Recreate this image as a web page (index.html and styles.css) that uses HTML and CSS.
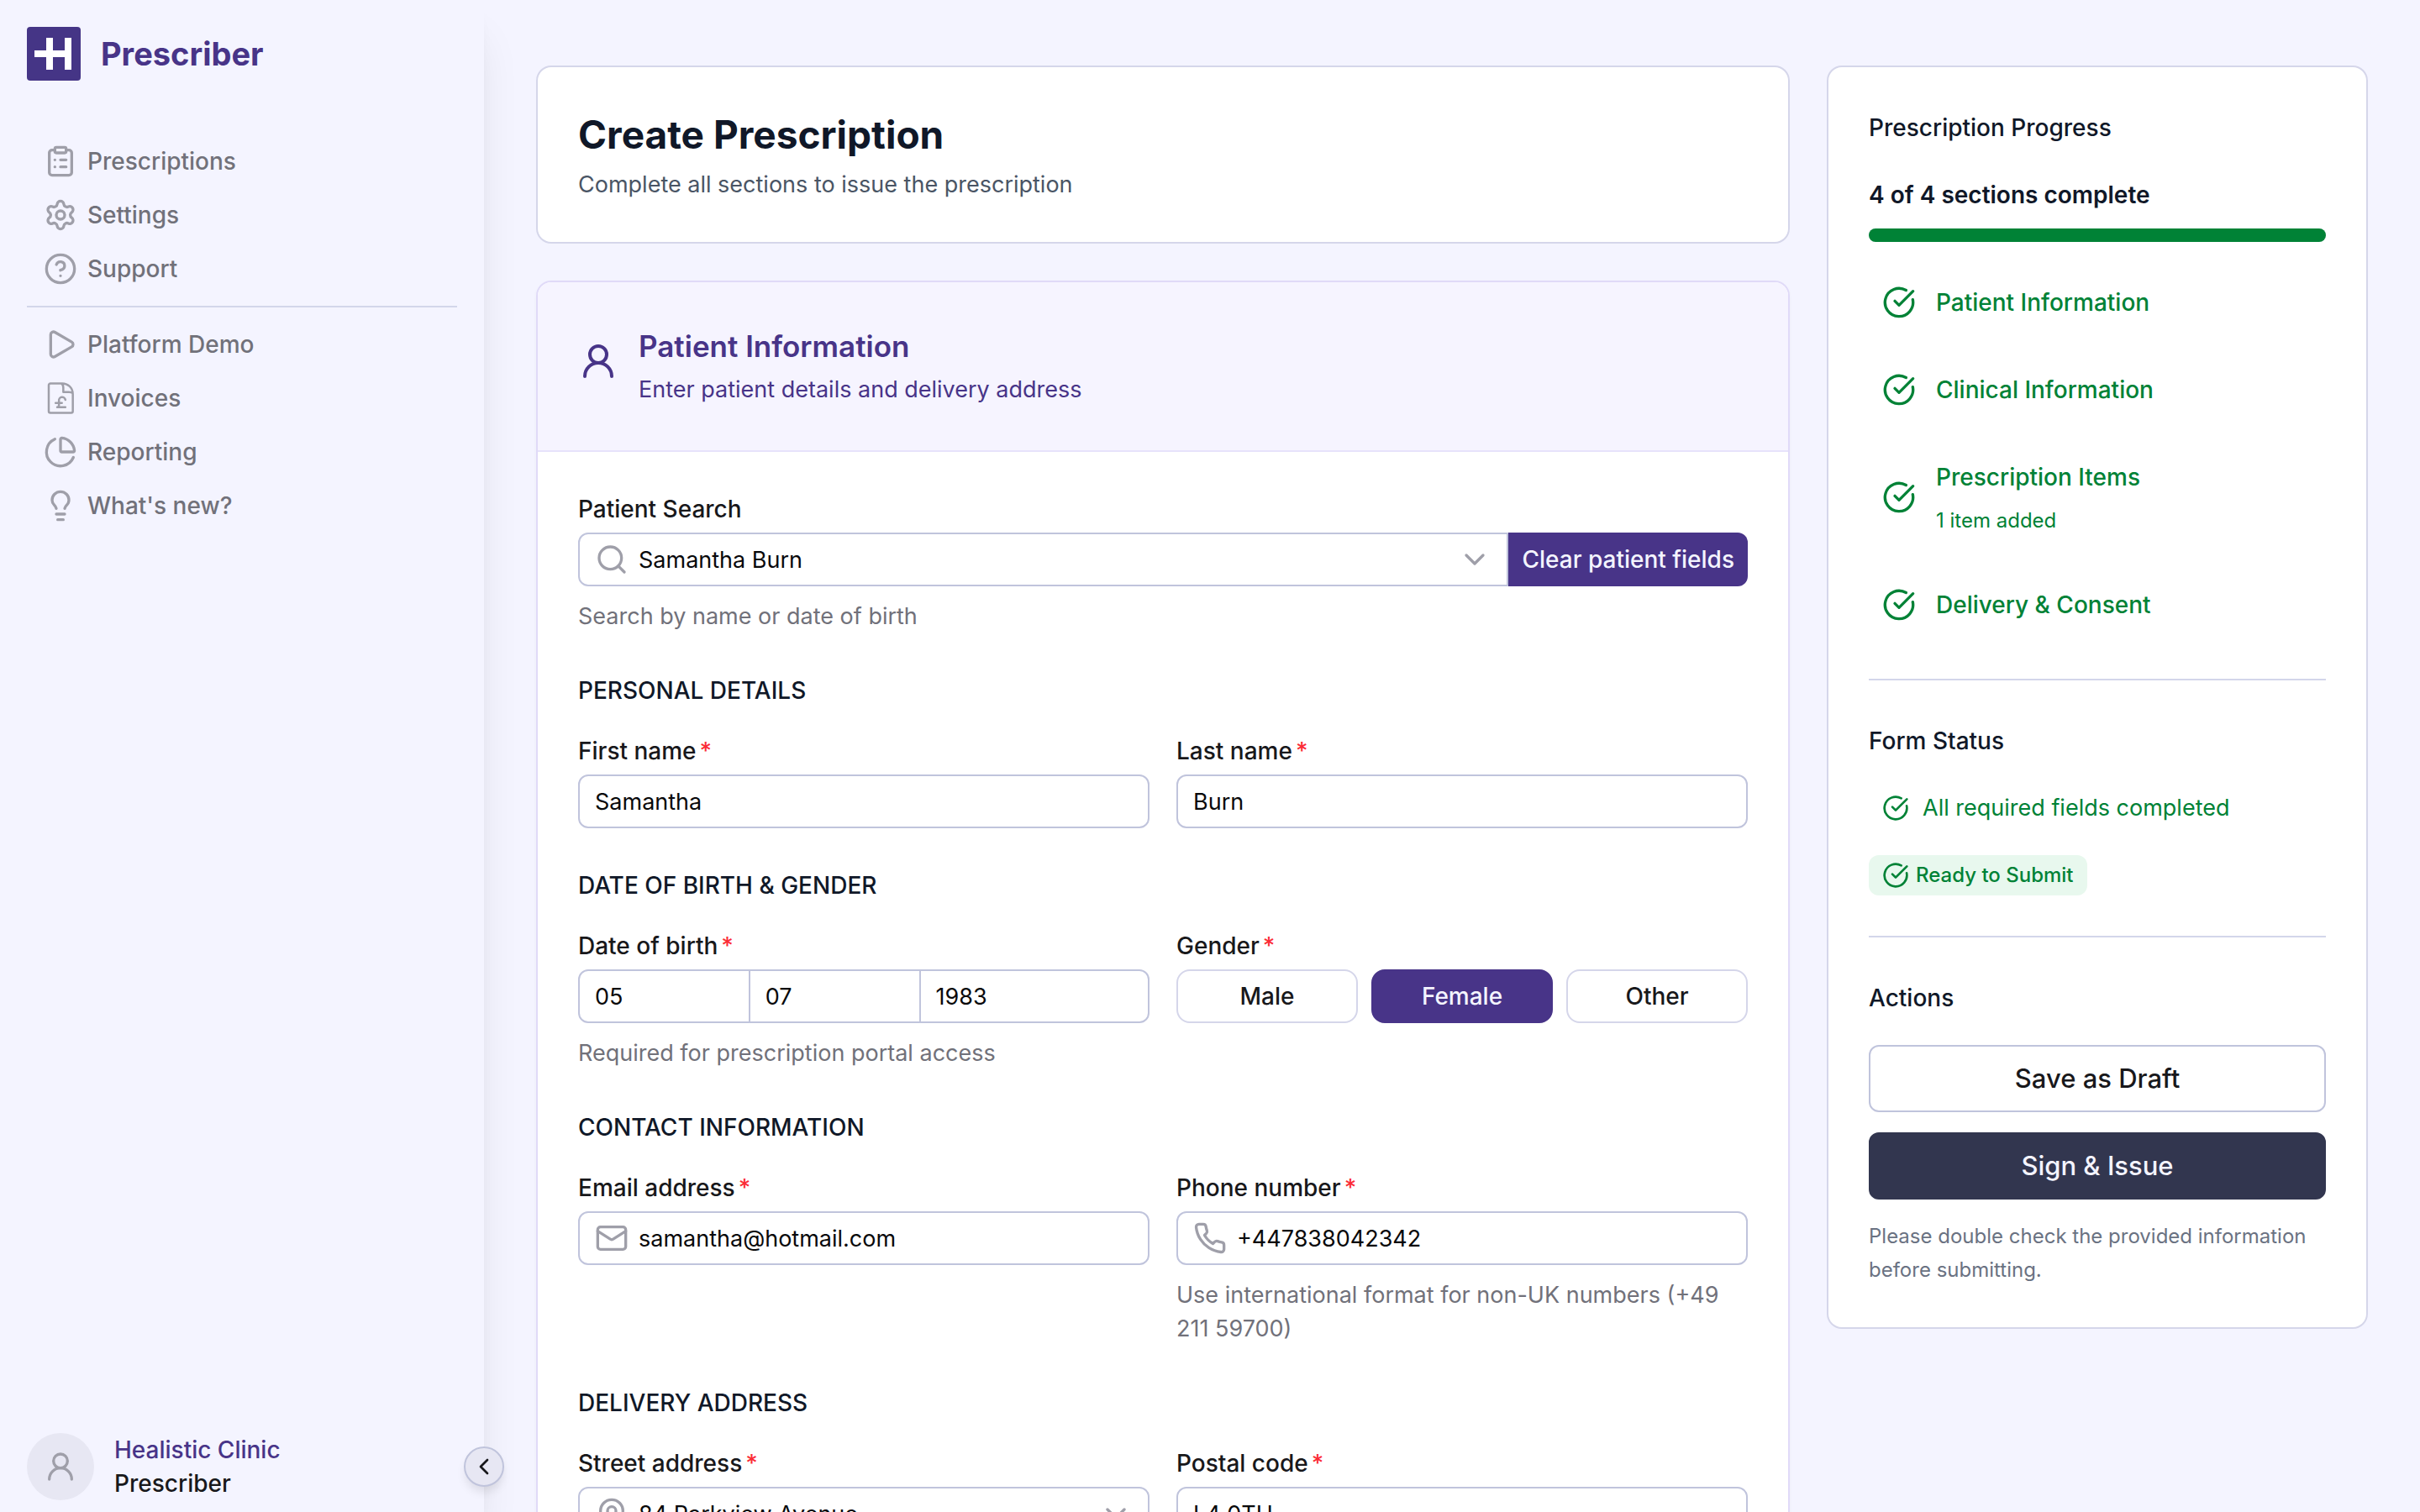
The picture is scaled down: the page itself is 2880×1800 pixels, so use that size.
FILE: index.html
```html
<!DOCTYPE html>
<html lang="en">
<head>
<meta charset="utf-8">
<title>Create Prescription</title>
<link rel="stylesheet" href="styles.css">
</head>
<body>
<svg class="sprite" aria-hidden="true">
  <symbol id="i-check" viewBox="0 0 24 24"><path d="M21.801 10A10 10 0 1 1 17 3.335"/><path d="m9 11 3 3L22 4"/></symbol>
  <symbol id="i-user" viewBox="0 0 24 24"><circle cx="12" cy="8" r="5"/><path d="M20 21a8 8 0 0 0-16 0"/></symbol>
  <symbol id="i-down" viewBox="0 0 24 24"><path d="m6 9 6 6 6-6"/></symbol>
</svg>
<div class="app">
  <aside class="sidebar">
    <div class="brand">
      <svg class="brand-logo" viewBox="0 0 64 64" aria-hidden="true"><rect width="64" height="64" rx="4" fill="#453586"/><path d="M9 28h14V13h8v15h14V13h8v38h-8V36H31v15h-8V36H9z" fill="#fff"/></svg>
      <span class="brand-name">Prescriber</span>
    </div>
    <nav class="nav">
      <a class="nav-link" href="#"><svg class="icon" viewBox="0 0 24 24"><path d="M16 4h2a2 2 0 0 1 2 2v14a2 2 0 0 1-2 2H6a2 2 0 0 1-2-2V6a2 2 0 0 1 2-2h2"/><rect x="8" y="2" width="8" height="4" rx="1"/><path d="M12 11h4M12 16h4M8 11h.01M8 16h.01"/></svg>Prescriptions</a>
      <a class="nav-link" href="#"><svg class="icon" viewBox="0 0 24 24"><path d="M9.671 4.136a2.340 2.340 0 0 1 4.659 0 2.340 2.340 0 0 0 3.319 1.915 2.340 2.340 0 0 1 2.330 4.033 2.340 2.340 0 0 0 0 3.831 2.340 2.340 0 0 1-2.330 4.033 2.340 2.340 0 0 0-3.319 1.915 2.340 2.340 0 0 1-4.659 0 2.340 2.340 0 0 0-3.320-1.915 2.340 2.340 0 0 1-2.330-4.033 2.340 2.340 0 0 0 0-3.831A2.340 2.340 0 0 1 6.350 6.051a2.340 2.340 0 0 0 3.319-1.915"/><circle cx="12" cy="12" r="3"/></svg>Settings</a>
      <a class="nav-link" href="#"><svg class="icon" viewBox="0 0 24 24"><circle cx="12" cy="12" r="10"/><path d="M9.090 9a3 3 0 0 1 5.830 1c0 2-3 3-3 3M12 17h.01"/></svg>Support</a>
    </nav>
    <hr class="nav-rule">
    <nav class="nav">
      <a class="nav-link" href="#"><svg class="icon" viewBox="0 0 24 24"><path d="M5 5a2 2 0 0 1 3.008-1.728l11.997 6.998a2 2 0 0 1 .003 3.458l-12 7A2 2 0 0 1 5 19z"/></svg>Platform Demo</a>
      <a class="nav-link" href="#"><svg class="icon icon-thin" viewBox="0 0 24 24"><path d="M13 1.500H4.800a1.200 1.200 0 0 0-1.200 1.200v18.600a1.200 1.200 0 0 0 1.200 1.200h14.800a1.200 1.200 0 0 0 1.200-1.200V9A7.500 7.500 0 0 0 12.500 1.500c1 .6 1.500 1.600 1.500 3v3.200h4c1.200 0 2 .2 2.700.8"/><path d="M15.500 13.200a2.200 2.200 0 0 0-4.600.8v3c0 .8-.5 1.500-1.300 1.500h5.900M8.500 15.500h4.500"/></svg>Invoices</a>
      <a class="nav-link" href="#"><svg class="icon" viewBox="0 0 24 24"><path d="M21 12c.552 0 1.005-.449.950-.998a10 10 0 0 0-8.953-8.951c-.550-.055-.998.398-.998.950v8a1 1 0 0 0 1 1z"/><path d="M21.210 15.890A10 10 0 1 1 8 2.830"/></svg>Reporting</a>
      <a class="nav-link" href="#"><svg class="icon" viewBox="0 0 24 24"><path d="M15 14c.2-1 .7-1.700 1.500-2.500 1-.9 1.500-2.200 1.500-3.500A6 6 0 0 0 6 8c0 1 .2 2.200 1.500 3.500.7.7 1.300 1.500 1.500 2.500M9 18h6M10 22h4"/></svg>What's new?</a>
    </nav>
    <div class="account">
      <span class="avatar"><svg class="icon" aria-hidden="true"><use href="#i-user"/></svg></span>
      <div class="account-text"><div class="account-org">Healistic Clinic</div><div class="account-role">Prescriber</div></div>
    </div>
    <button class="collapse" type="button" aria-label="Collapse sidebar"><svg class="collapse-icon" viewBox="0 0 24 24"><path d="m15 18-6-6 6-6"/></svg></button>
  </aside>

  <main class="main">
    <div class="column">
      <section class="card intro">
        <h1 class="page-title">Create Prescription</h1>
        <p class="page-sub">Complete all sections to issue the prescription</p>
      </section>

      <section class="card patient">
        <header class="patient-head">
          <svg class="patient-icon" aria-hidden="true"><use href="#i-user"/></svg>
          <div><h2 class="patient-title">Patient Information</h2><p class="patient-sub">Enter patient details and delivery address</p></div>
        </header>
        <form class="form">
          <div class="field">
            <label for="search">Patient Search</label>
            <div class="search-row">
              <div class="control control-joined">
                <svg class="icon" viewBox="0 0 24 24"><circle cx="11" cy="11" r="8"/><path d="m21 21-4.300-4.300"/></svg>
                <input id="search" type="text" value="Samantha Burn">
                <svg class="chevron" aria-hidden="true"><use href="#i-down"/></svg>
              </div>
              <button class="clear" type="button">Clear patient fields</button>
            </div>
            <p class="hint">Search by name or date of birth</p>
          </div>

          <fieldset class="group">
            <legend>PERSONAL DETAILS</legend>
            <div class="pair">
              <div class="field"><label for="first">First name<span class="req">*</span></label><div class="control"><input id="first" type="text" value="Samantha"></div></div>
              <div class="field"><label for="last">Last name<span class="req">*</span></label><div class="control"><input id="last" type="text" value="Burn"></div></div>
            </div>
          </fieldset>

          <fieldset class="group">
            <legend>DATE OF BIRTH &amp; GENDER</legend>
            <div class="pair">
              <div class="field">
                <label for="day">Date of birth<span class="req">*</span></label>
                <div class="control date">
                  <input id="day" type="text" value="05" aria-label="Day">
                  <input type="text" value="07" aria-label="Month">
                  <input class="year" type="text" value="1983" aria-label="Year">
                </div>
                <p class="hint">Required for prescription portal access</p>
              </div>
              <div class="field">
                <span class="label" id="gender">Gender<span class="req">*</span></span>
                <div class="choices" role="group" aria-labelledby="gender">
                  <button class="choice" type="button">Male</button>
                  <button class="choice choice-on" type="button" aria-pressed="true">Female</button>
                  <button class="choice" type="button">Other</button>
                </div>
              </div>
            </div>
          </fieldset>

          <fieldset class="group">
            <legend>CONTACT INFORMATION</legend>
            <div class="pair">
              <div class="field"><label for="email">Email address<span class="req">*</span></label><div class="control"><svg class="icon" viewBox="0 0 24 24"><rect x="2" y="4" width="20" height="16" rx="2"/><path d="m22 7-8.970 5.700a1.940 1.940 0 0 1-2.060 0L2 7"/></svg><input id="email" type="email" value="samantha@hotmail.com"></div></div>
              <div class="field"><label for="phone">Phone number<span class="req">*</span></label><div class="control"><svg class="icon" viewBox="0 0 24 24"><path d="M22 16.920v3a2 2 0 0 1-2.180 2 19.790 19.790 0 0 1-8.630-3.070 19.500 19.500 0 0 1-6-6 19.790 19.790 0 0 1-3.070-8.670A2 2 0 0 1 4.110 2h3a2 2 0 0 1 2 1.720 12.840 12.840 0 0 0 .7 2.810 2 2 0 0 1-.450 2.110L8.090 9.910a16 16 0 0 0 6 6l1.270-1.270a2 2 0 0 1 2.110-.450 12.840 12.840 0 0 0 2.810.7A2 2 0 0 1 22 16.920z"/></svg><input id="phone" type="tel" value="+447838042342"></div><p class="hint">Use international format for non-UK numbers (+49 211 59700)</p></div>
            </div>
          </fieldset>

          <fieldset class="group">
            <legend>DELIVERY ADDRESS</legend>
            <div class="pair">
              <div class="field"><label for="street">Street address<span class="req">*</span></label><div class="control"><svg class="icon" viewBox="0 0 24 24"><path d="M20 10c0 6-8 12-8 12s-8-6-8-12a8 8 0 0 1 16 0z"/><circle cx="12" cy="10" r="3"/></svg><input id="street" type="text" value="84 Parkview Avenue"><svg class="chevron" aria-hidden="true"><use href="#i-down"/></svg></div></div>
              <div class="field"><label for="postal">Postal code<span class="req">*</span></label><div class="control"><input id="postal" type="text" value="L4 0TH"></div></div>
            </div>
          </fieldset>
        </form>
      </section>
    </div>

    <aside class="card summary">
      <section class="block">
        <h2 class="block-title">Prescription Progress</h2>
        <div class="meter"><p class="meter-text">4 of 4 sections complete</p><div class="meter-track"><div class="meter-fill" style="width:100%"></div></div></div>
        <ul class="steps">
          <li class="step"><svg class="icon"><use href="#i-check"/></svg><div>Patient Information</div></li>
          <li class="step"><svg class="icon"><use href="#i-check"/></svg><div>Clinical Information</div></li>
          <li class="step"><svg class="icon"><use href="#i-check"/></svg><div>Prescription Items<p class="step-note">1 item added</p></div></li>
          <li class="step"><svg class="icon"><use href="#i-check"/></svg><div>Delivery &amp; Consent</div></li>
        </ul>
      </section>
      <section class="block">
        <h2 class="block-title">Form Status</h2>
        <p class="status"><svg class="icon-small"><use href="#i-check"/></svg>All required fields completed</p>
        <span class="badge"><svg class="icon-small"><use href="#i-check"/></svg>Ready to Submit</span>
      </section>
      <section class="block">
        <h2 class="block-title">Actions</h2>
        <div class="actions">
          <button class="action" type="button">Save as Draft</button>
          <button class="action action-main" type="button">Sign &amp; Issue</button>
          <p class="note">Please double check the provided information before submitting.</p>
        </div>
      </section>
    </aside>
  </main>
</div>
</body>
</html>
```
FILE: styles.css
```css
*, *::before, *::after { box-sizing: border-box; }
body { margin: 0; background: #f4f4ff; color: #18181b; font: 400 28px/40px Inter, "Liberation Sans", sans-serif; }
h1, h2, p, ul, fieldset, legend { margin: 0; padding: 0; border: 0; }
ul { list-style: none; }
fieldset { min-width: 0; }
button, input { font: inherit; color: inherit; margin: 0; }
button { cursor: pointer; }
svg { flex: none; fill: none; stroke: currentColor; stroke-width: 2; stroke-linecap: round; stroke-linejoin: round; }
.sprite { display: none; }
.icon { width: 40px; height: 40px; }
.icon-thin { stroke-width: 1.5; }
.icon-small { width: 32px; height: 32px; }

.app { display: flex; height: 100vh; }

.sidebar { position: relative; z-index: 1; display: flex; flex-direction: column; flex: none; width: 576px; padding: 32px 32px 14px; background: #f4f4ff; box-shadow: 0 40px 50px -10px rgba(0, 0, 0, .1), 0 16px 20px -12px rgba(0, 0, 0, .1); }
.brand { display: flex; align-items: center; gap: 24px; margin-bottom: 64px; }
.brand-logo { width: 64px; height: 64px; stroke: none; }
.brand-name { color: #483488; font-size: 38px; font-weight: 700; line-height: 64px; }
.nav { display: flex; flex-direction: column; }
.nav-link { display: flex; align-items: center; gap: 12px; height: 64px; padding: 0 20px; color: #71717a; font-weight: 500; text-decoration: none; }
.nav-link .icon { color: #9f9fa9; }
.nav-rule { width: 100%; height: 2px; margin: 12px 0; border: 0; background: #d3d6ea; }
.account { display: flex; align-items: center; gap: 24px; margin-top: auto; }
.avatar { display: flex; align-items: center; justify-content: center; width: 80px; height: 80px; border-radius: 50%; background: #e7e7f3; color: #9f9fa9; }
.account-text { font-weight: 500; }
.account-org { color: #483488; }
.collapse { position: absolute; right: -24px; bottom: 30px; display: flex; align-items: center; justify-content: center; width: 48px; height: 48px; padding: 0; border: 2px solid #c0c4dc; border-radius: 50%; background: #e7e7f3; box-shadow: 0 8px 12px -2px rgba(0, 0, 0, .1); }
.collapse-icon { width: 32px; height: 32px; }

.main { flex: 1; min-width: 0; display: grid; grid-template-columns: minmax(0, 1fr) 640px; align-items: start; gap: 48px; padding: 80px 64px; overflow-y: auto; scrollbar-width: none; }
.column { display: flex; flex-direction: column; gap: 48px; }
.card { border-radius: 16px; background: #fff; box-shadow: 0 0 0 2px #d5d6ea; }
.intro { padding: 48px; }
.page-title { color: #101828; font-size: 46px; font-weight: 700; line-height: 64px; margin-bottom: 8px; }
.page-sub { color: #4a5565; }

.patient { box-shadow: 0 0 0 2px #e0daf8, 0 2px 6px rgba(0, 0, 0, .06); }
.patient-head { display: flex; align-items: center; gap: 24px; padding: 48px 48px 52px; border-bottom: 2px solid #e7e2fb; border-radius: 16px 16px 0 0; background: #f6f4ff; color: #483488; }
.patient-icon { width: 48px; height: 48px; margin-bottom: 8px; }
.patient-title { font-size: 35px; font-weight: 600; line-height: 56px; margin-bottom: 4px; }
.page-sub, .patient-sub, .hint, .status, .control input { font-size: 27px; }
.form { display: flex; flex-direction: column; gap: 48px; padding: 48px; }
.field { display: flex; flex-direction: column; }
.field > label, .label { margin-bottom: 8px; font-weight: 500; }
.req { margin-left: 4px; color: #fb2c36; }
.hint { margin-top: 16px; color: #71717a; }
.control { display: flex; align-items: center; flex: 1; min-width: 0; height: 64px; padding: 0 18px; border: 2px solid #c0c4dc; border-radius: 12px; background: #fff; }
.field > .control { flex: none; }
.control .icon, .chevron { color: #9f9fa9; }
.control .icon { margin-right: 12px; }
.chevron { width: 40px; height: 40px; margin-left: 12px; }
.control input { flex: 1; min-width: 0; width: 100%; height: 60px; padding: 0; border: 0; outline: 0; background: none; color: #09090b; }
.search-row { display: flex; }
.control-joined { border-radius: 12px 0 0 12px; }
.clear { flex: none; height: 64px; padding: 0 16px; border: 0; border-radius: 0 12px 12px 0; background: #483488; color: #f4f4ff; font-weight: 500; }
.group legend { margin-bottom: 32px; color: #101828; font-weight: 500; }
.pair { display: grid; grid-template-columns: minmax(0, 1fr) minmax(0, 1fr); gap: 32px; }
.control.date { display: grid; grid-template-columns: 3fr 3fr 4fr; padding: 0; }
.date input { padding: 0 18px; border-right: 2px solid #c0c4dc; }
.date .year { border-right: 0; }
.choices { display: grid; grid-template-columns: repeat(3, minmax(0, 1fr)); gap: 16px; }
.choice { height: 64px; padding: 0; border: 2px solid #d5d6ea; border-radius: 16px; background: #fff; font-weight: 500; }
.choice-on { border-color: #483488; background: #483488; color: #f4f4ff; }

.summary { padding: 48px; }
.block + .block { margin-top: 48px; padding-top: 48px; border-top: 2px solid #d3d6ea; }
.block-title { margin-bottom: 32px; color: #101828; font-size: 28px; font-weight: 500; line-height: 48px; }
.meter-text { color: #101828; font-weight: 600; line-height: 48px; }
.meter-track { height: 16px; margin: 16px 0 32px; border-radius: 8px; background: #e7e7f3; }
.meter-fill { height: 16px; border-radius: 8px; background: #008236; }
.steps { display: flex; flex-direction: column; gap: 24px; }
.step { display: flex; align-items: center; gap: 24px; padding: 16px; color: #008236; font-weight: 500; line-height: 48px; }
.step-note { margin-top: 8px; font-size: 24px; font-weight: 400; line-height: 40px; }
.status { display: flex; align-items: center; gap: 16px; margin-bottom: 32px; padding-left: 16px; color: #008236; line-height: 48px; }
.badge { display: flex; align-items: center; gap: 8px; width: max-content; height: 48px; padding: 0 16px; border-radius: 12px; background: #e8f8ee; color: #008236; font-size: 24px; font-weight: 500; }
.actions { display: flex; flex-direction: column; gap: 24px; }
.action { height: 80px; padding: 0; border: 2px solid #c0c4dc; border-radius: 12px; background: #fff; font-size: 31px; font-weight: 500; }
.action-main { border-color: #32364f; background: #32364f; color: #f4f4ff; }
.note { color: #6a7282; font-size: 24px; }
```
